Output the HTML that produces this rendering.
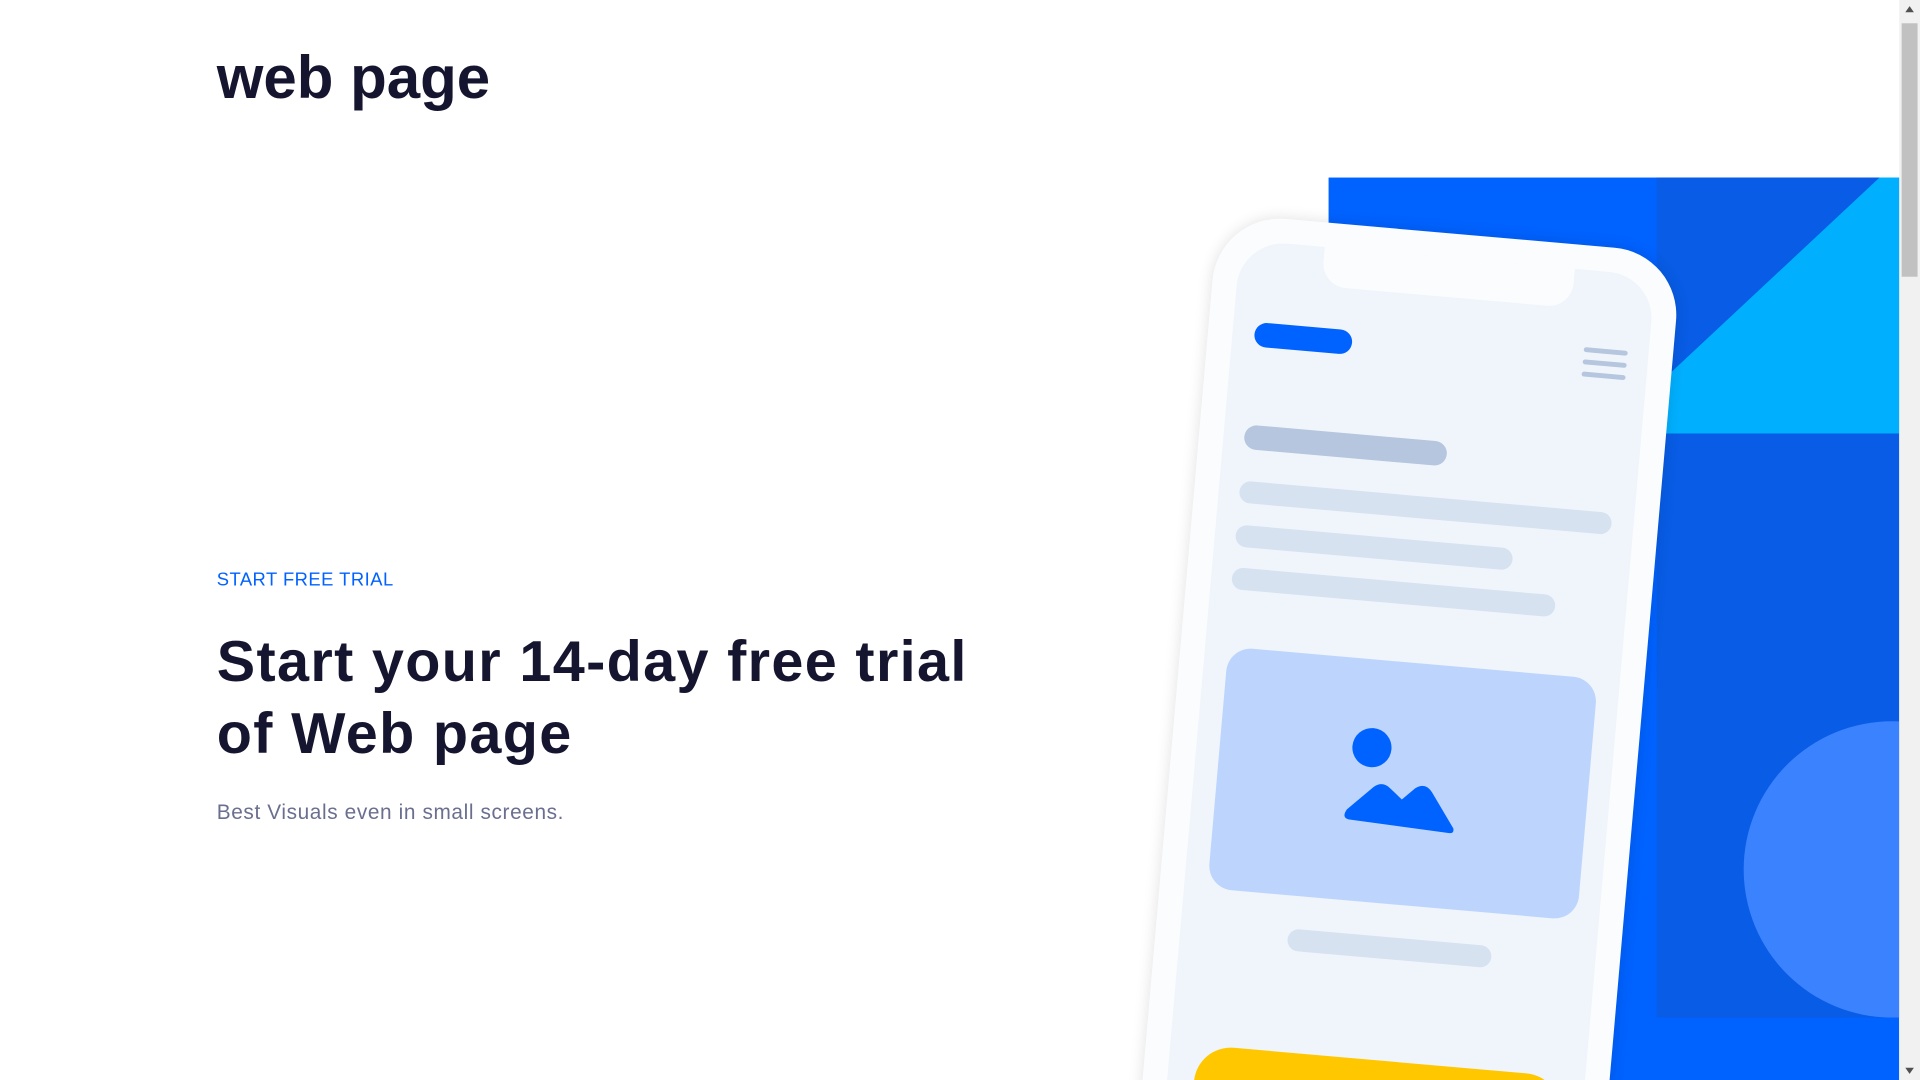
<!DOCTYPE html>
<html><head><meta charset="utf-8"><style>
html,body{margin:0;padding:0;width:1920px;height:1080px;overflow:hidden;background:#fff}
#w{position:absolute;left:0;top:0;width:1568px;height:882px;transform:scale(1.22449);transform-origin:0 0;font-family:"Liberation Sans",sans-serif;overflow:hidden}
.a{position:absolute}
.logo{left:177px;top:36px;font-size:49px;font-weight:bold;color:#151530;letter-spacing:0px}
.eye{left:177px;top:465px;font-size:15px;color:#0062ff;letter-spacing:0.4px}
h1{position:absolute;left:177px;top:510px;margin:0;font-size:47px;line-height:59px;font-weight:bold;color:#151530;letter-spacing:1.1px}
.sub{left:177px;top:654px;font-size:17px;color:#6b6f8f;letter-spacing:0.5px}
.pill{position:absolute;border-radius:12px}
</style></head><body><div id="w">
<div class="a logo">web page</div>
<div class="a eye">START FREE TRIAL</div>
<h1>Start your 14-day free trial<br>of Web page</h1>
<div class="a sub">Best Visuals even in small screens.</div>

<div class="a" style="left:1085px;top:145px;width:466px;height:737px;background:#0062ff"></div>
<div class="a" style="left:1353px;top:145px;width:198px;height:686px;background:#085ce5"></div>
<svg class="a" style="left:1353px;top:145px" width="198" height="686">
<polygon points="182,0 198,0 198,209 0,209 0,170" fill="#00b0ff"/>
<circle cx="192" cy="565" r="121" fill="#3b82ff"/>
</svg>

<div class="a" style="left:995px;top:174px;width:380px;height:1000px;border-radius:55px;background:#fbfcfe;box-shadow:0 0 12px rgba(0,0,0,.12);transform:rotate(5deg);transform-origin:0 0">
 <div class="a" style="left:20px;top:20px;width:340px;height:960px;border-radius:38px;background:#f0f5fc"></div>
 <div class="a" style="left:89px;top:20px;width:205px;height:32px;border-radius:0 0 20px 20px;background:#fbfcfe"></div>
 <div class="pill" style="left:38px;top:86px;width:80px;height:20px;background:#0062ff;border-radius:10px"></div>
 <div class="pill" style="left:307px;top:83px;width:36px;height:4px;background:#b5c6de;border-radius:2px"></div>
 <div class="pill" style="left:307px;top:93px;width:36px;height:4px;background:#b5c6de;border-radius:2px"></div>
 <div class="pill" style="left:307px;top:103px;width:36px;height:4px;background:#b5c6de;border-radius:2px"></div>
 <div class="pill" style="left:37px;top:170px;width:166px;height:20px;background:#b5c6de;border-radius:10px"></div>
 <div class="pill" style="left:37px;top:216px;width:305px;height:18px;background:#d6e2f0;border-radius:9px"></div>
 <div class="pill" style="left:37px;top:252px;width:227px;height:18px;background:#d6e2f0;border-radius:9px"></div>
 <div class="pill" style="left:37px;top:287px;width:265px;height:18px;background:#d6e2f0;border-radius:9px"></div>
 <div class="pill" style="left:39px;top:352px;width:303px;height:198px;background:#bdd5fd;border-radius:20px">
  <svg width="303" height="198" style="position:absolute;left:0;top:0">
   <circle cx="124" cy="72" r="16" fill="#0062ff"/>
   <path d="M108 124 L128 104 Q135 98 142 104 L152 112 L162 102 Q170 96 176 104 L196 132 Q197 136 193 136 L110 132 Q104 131 108 124Z" fill="#0062ff"/>
  </svg>
 </div>
 <div class="pill" style="left:108px;top:577px;width:167px;height:18px;background:#d6e2f0;border-radius:9px"></div>
 <div class="pill" style="left:42px;top:678px;width:300px;height:60px;background:#ffc700;border-radius:30px"></div>
</div>

<div class="a" style="left:1551px;top:0;width:17px;height:882px;background:#f1f1f1"></div>
<div class="a" style="left:1553px;top:19px;width:13px;height:207px;background:#c1c1c1"></div>
<svg class="a" style="left:1551px;top:0" width="17" height="882">
<polygon points="5,10 12,10 8.5,5" fill="#505050"/>
<polygon points="5,872 12,872 8.5,877" fill="#505050"/>
</svg>
</div></body></html>
